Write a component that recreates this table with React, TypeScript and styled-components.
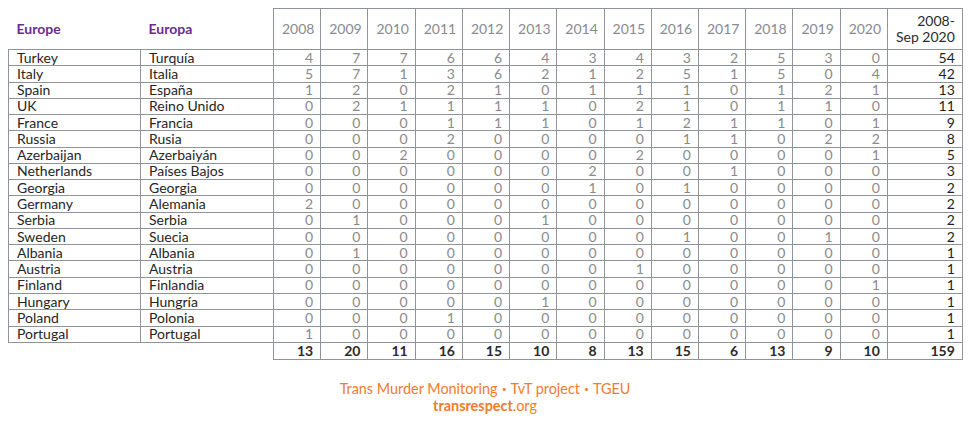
import React from "react";
import styled, { createGlobalStyle } from "styled-components";

const Global = createGlobalStyle`
  html, body { margin: 0; padding: 0; background: #ffffff; }
  body { font-family: Lato, "Open Sans", "Liberation Sans", sans-serif; }
`;

const Page = styled.div`
  width: 970px;
  height: 421px;
  padding: 8px 8px 0 8px;
  box-sizing: border-box;
  display: flex;
  flex-direction: column;
  align-items: stretch;
`;

const Table = styled.table`
  border-collapse: collapse;
  table-layout: fixed;
  width: 954px;
  font-size: 14px;
  line-height: 14px;
`;

const HeadCell = styled.th<{ $bordered?: boolean; $align?: string; $kind?: "region" | "year" }>`
  height: 40px;
  padding: 0 7px 0 8px;
  border: ${(p) => (p.$bordered ? "1px solid #8f949b" : "none")};
  text-align: ${(p) => p.$align || "right"};
  vertical-align: middle;
  font-weight: ${(p) => (p.$kind === "region" ? 700 : 400)};
  color: ${(p) => (p.$kind === "region" ? "#6a2c8e" : "#868a91")};
  font-size: 14px;
  line-height: 16px;
`;

const TotalHead = styled(HeadCell)`
  color: #2b2b2b;
`;

const Row = styled.tr`
  height: 16.28px;
`;

const NameCell = styled.td`
  padding: 0 4px 0 8px;
  border: 1px solid #8f949b;
  color: #262626;
  text-align: left;
  white-space: nowrap;
  overflow: hidden;
`;

const NumCell = styled.td<{ $dark?: boolean }>`
  padding: 0 7px 0 4px;
  border: 1px solid #8f949b;
  text-align: right;
  color: ${(p) => (p.$dark ? "#1f1f1f" : "#8a8a8a")};
`;

const TotalsRow = styled.tr`
  height: 17px;
`;

const EmptyCell = styled.td`
  border: none;
`;

const SumCell = styled.td`
  padding: 0 7px 0 4px;
  border: 1px solid #8f949b;
  text-align: right;
  font-weight: 700;
  color: #2a2a2a;
`;

const Footer = styled.div`
  margin-top: 20px;
  text-align: center;
  color: #f27b2c;
  font-size: 14.4px;
  line-height: 17px;
`;

const Strong = styled.span`
  font-weight: 700;
`;

const Dot = styled.span`
  font-weight: 900;
  padding: 0 1px;
`;

const years = [2008, 2009, 2010, 2011, 2012, 2013, 2014, 2015, 2016, 2017, 2018, 2019, 2020];

const rows: [string, string, number[], number][] = [
  ["Turkey", "Turquía", [4, 7, 7, 6, 6, 4, 3, 4, 3, 2, 5, 3, 0], 54],
  ["Italy", "Italia", [5, 7, 1, 3, 6, 2, 1, 2, 5, 1, 5, 0, 4], 42],
  ["Spain", "España", [1, 2, 0, 2, 1, 0, 1, 1, 1, 0, 1, 2, 1], 13],
  ["UK", "Reino Unido", [0, 2, 1, 1, 1, 1, 0, 2, 1, 0, 1, 1, 0], 11],
  ["France", "Francia", [0, 0, 0, 1, 1, 1, 0, 1, 2, 1, 1, 0, 1], 9],
  ["Russia", "Rusia", [0, 0, 0, 2, 0, 0, 0, 0, 1, 1, 0, 2, 2], 8],
  ["Azerbaijan", "Azerbaiyán", [0, 0, 2, 0, 0, 0, 0, 2, 0, 0, 0, 0, 1], 5],
  ["Netherlands", "Países Bajos", [0, 0, 0, 0, 0, 0, 2, 0, 0, 1, 0, 0, 0], 3],
  ["Georgia", "Georgia", [0, 0, 0, 0, 0, 0, 1, 0, 1, 0, 0, 0, 0], 2],
  ["Germany", "Alemania", [2, 0, 0, 0, 0, 0, 0, 0, 0, 0, 0, 0, 0], 2],
  ["Serbia", "Serbia", [0, 1, 0, 0, 0, 1, 0, 0, 0, 0, 0, 0, 0], 2],
  ["Sweden", "Suecia", [0, 0, 0, 0, 0, 0, 0, 0, 1, 0, 0, 1, 0], 2],
  ["Albania", "Albania", [0, 1, 0, 0, 0, 0, 0, 0, 0, 0, 0, 0, 0], 1],
  ["Austria", "Austria", [0, 0, 0, 0, 0, 0, 0, 1, 0, 0, 0, 0, 0], 1],
  ["Finland", "Finlandia", [0, 0, 0, 0, 0, 0, 0, 0, 0, 0, 0, 0, 1], 1],
  ["Hungary", "Hungría", [0, 0, 0, 0, 0, 1, 0, 0, 0, 0, 0, 0, 0], 1],
  ["Poland", "Polonia", [0, 0, 0, 1, 0, 0, 0, 0, 0, 0, 0, 0, 0], 1],
  ["Portugal", "Portugal", [1, 0, 0, 0, 0, 0, 0, 0, 0, 0, 0, 0, 0], 1],
];

const totals = [13, 20, 11, 16, 15, 10, 8, 13, 15, 6, 13, 9, 10];

export default function App() {
  return (
    <>
      <Global />
      <Page>
        <Table>
          <colgroup>
            <col style={{ width: 132 }} />
            <col style={{ width: 133 }} />
            {years.map((y) => (
              <col key={y} style={{ width: 47.23 }} />
            ))}
            <col style={{ width: 75 }} />
          </colgroup>
          <thead>
            <tr>
              <HeadCell $kind="region" $align="left">Europe</HeadCell>
              <HeadCell $kind="region" $align="left">Europa</HeadCell>
              {years.map((y) => (
                <HeadCell key={y} $bordered $kind="year">
                  {y}
                </HeadCell>
              ))}
              <TotalHead $bordered $kind="year">
                2008-
                <br />
                Sep 2020
              </TotalHead>
            </tr>
          </thead>
          <tbody>
            {rows.map(([en, es, vals, total]) => (
              <Row key={en}>
                <NameCell>{en}</NameCell>
                <NameCell>{es}</NameCell>
                {vals.map((v, i) => (
                  <NumCell key={i}>{v}</NumCell>
                ))}
                <NumCell $dark>{total}</NumCell>
              </Row>
            ))}
            <TotalsRow>
              <EmptyCell />
              <EmptyCell />
              {totals.map((t, i) => (
                <SumCell key={i}>{t}</SumCell>
              ))}
              <SumCell>159</SumCell>
            </TotalsRow>
          </tbody>
        </Table>
        <Footer>
          Trans Murder Monitoring <Dot>·</Dot> TvT project <Dot>·</Dot> TGEU
          <br />
          <Strong>transrespect</Strong>.org
        </Footer>
      </Page>
    </>
  );
}
